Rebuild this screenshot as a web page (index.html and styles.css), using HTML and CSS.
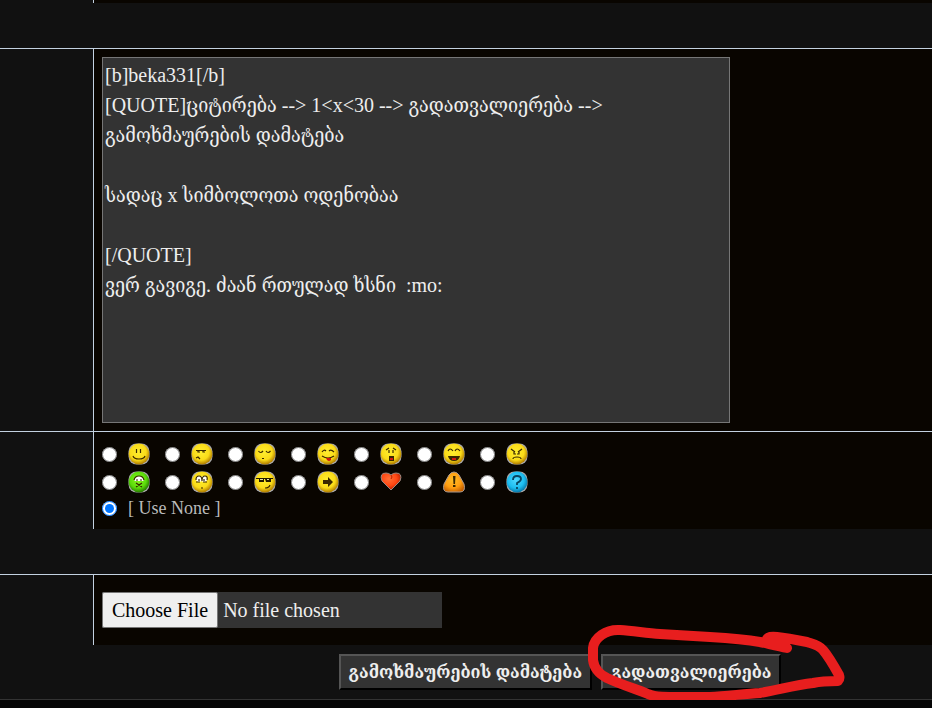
FILE: index.html
```html
<!DOCTYPE html>
<html lang="ka">
<head>
    <meta charset="UTF-8">
    <meta name="viewport" content="width=device-width, initial-scale=1.0">
    <title>გამოხმაურების დამატება</title>
    <link rel="stylesheet" href="styles.css">
</head>
<body>
    <svg class="defs" aria-hidden="true">
        <defs>
            <radialGradient id="yellow" cx="45%" cy="40%" r="60%">
                <stop offset="0" stop-color="#ffee30"/>
                <stop offset="0.65" stop-color="#fadb18"/>
                <stop offset="1" stop-color="#b07c00"/>
            </radialGradient>
            <radialGradient id="green" cx="45%" cy="40%" r="60%">
                <stop offset="0" stop-color="#8af520"/>
                <stop offset="0.65" stop-color="#5bdc0a"/>
                <stop offset="1" stop-color="#267800"/>
            </radialGradient>
            <radialGradient id="blue" cx="45%" cy="40%" r="60%">
                <stop offset="0" stop-color="#4fd8ff"/>
                <stop offset="0.65" stop-color="#1cbdf0"/>
                <stop offset="1" stop-color="#0878a8"/>
            </radialGradient>
            <radialGradient id="orange" cx="45%" cy="40%" r="65%">
                <stop offset="0" stop-color="#ffbf28"/>
                <stop offset="0.6" stop-color="#ff9d10"/>
                <stop offset="1" stop-color="#c56000"/>
            </radialGradient>
            <radialGradient id="red" cx="40%" cy="35%" r="65%">
                <stop offset="0" stop-color="#ff7036"/>
                <stop offset="0.6" stop-color="#ff4713"/>
                <stop offset="1" stop-color="#b52000"/>
            </radialGradient>
            <g id="ball">
                <rect x="0.500" y="0.500" width="21" height="21" rx="8" fill="#aaa"/>
                <circle cx="11" cy="11" r="10.400"/>
            </g>
        </defs>
    </svg>

    <form id="postForm">
        <div class="row row-end">
            <div class="side"></div>
            <div class="main"></div>
        </div>

        <div class="spacer"></div>

        <div class="row">
            <div class="side"></div>
            <div class="main post">
                <textarea id="post" name="post" aria-label="Post" spellcheck="false">[b]beka331[/b]
[QUOTE]ციტირება --&gt; 1&lt;x&lt;30 --&gt; გადათვალიერება --&gt; გამოხმაურების დამატება

სადაც x სიმბოლოთა ოდენობაა

[/QUOTE]
ვერ გავიგე. ძაან რთულად ხსნი  :mo:</textarea>
            </div>
        </div>

        <div class="row">
            <div class="side"></div>
            <div class="main icons">
                <div class="icon-grid">
                    <label><input type="radio" name="iconid" value="1" aria-label="Smile">
                        <svg viewBox="0 0 22 22"><use href="#ball" fill="url(#yellow)"/><path class="line" d="M8.500 6v4M12.500 6v4M5 13q1 3 6 3t6-3"/></svg></label>
                    <label><input type="radio" name="iconid" value="2" aria-label="Dry">
                        <svg viewBox="0 0 22 22"><use href="#ball" fill="url(#yellow)"/><path class="line" d="M5 7.500h10M7 8v1h2M12 8v1h2M5 15l2-1 2 2"/></svg></label>
                    <label><input type="radio" name="iconid" value="3" aria-label="Sleep">
                        <svg viewBox="0 0 22 22"><use href="#ball" fill="url(#yellow)"/><path class="line" d="M4.500 8q2 3 4.500 0M12 8q2 3 4.500 0M8 15.500h2"/></svg></label>
                    <label><input type="radio" name="iconid" value="4" aria-label="Tongue">
                        <svg viewBox="0 0 22 22"><use href="#ball" fill="url(#yellow)"/><path class="line" d="M5 9q2-3 4-1M12 8q2-2 5 1M5 13q6 4 12 0"/><path d="M9 15h5v2q-2 2-4 0z" fill="#d01810"/></svg></label>
                    <label><input type="radio" name="iconid" value="5" aria-label="Shocked">
                        <svg viewBox="0 0 22 22"><use href="#ball" fill="url(#yellow)"/><path class="line" d="M6 7l3-2M13 5l3 2M9 7v3M13 7v3"/><path d="M9 13h5v5H9z" fill="#3a2800"/><path d="M10 15h3v2h-3z" fill="#d01810"/></svg></label>
                    <label><input type="radio" name="iconid" value="6" aria-label="Laugh">
                        <svg viewBox="0 0 22 22"><use href="#ball" fill="url(#yellow)"/><path class="line" d="M5 8q2-4 5 0M12 8q2-4 5 0"/><path d="M5 13h12q-1 5-6 5t-6-5z" fill="#3a2800"/><path d="M9 15h4v2H9z" fill="#d01810"/></svg></label>
                    <label><input type="radio" name="iconid" value="7" aria-label="Angry">
                        <svg viewBox="0 0 22 22"><use href="#ball" fill="url(#yellow)"/><path class="line" d="M5 6l4 3M16 6l-4 3M8 8v3h2M13 8v3h-2M7 16q0-2 4-2t4 2"/></svg></label>

                    <label><input type="radio" name="iconid" value="8" aria-label="Sick">
                        <svg viewBox="0 0 22 22"><use href="#ball" fill="url(#green)"/><path d="M6 9q1-4 5-4t5 4l-1 1H7z" fill="#fff"/><path class="line" d="M6 9q1-4 5-4t5 4M8 9h2M12 9h2M8 12l6 4M14 12l-6 4"/></svg></label>
                    <label><input type="radio" name="iconid" value="9" aria-label="Roll eyes">
                        <svg viewBox="0 0 22 22"><use href="#ball" fill="url(#yellow)"/><circle cx="8" cy="8" r="3" fill="#fff"/><circle cx="13" cy="8" r="3" fill="#fff"/><path class="line" d="M5 9q0-4 3-4t3 5q0-5 3-5t2 4M5 11h4M12 11h4M8 8v2M13 8v2M10 17h2"/></svg></label>
                    <label><input type="radio" name="iconid" value="10" aria-label="Cool">
                        <svg viewBox="0 0 22 22"><use href="#ball" fill="url(#yellow)"/><path d="M2 7h17v1h-2v3h-5l-1-3h-1v3H5V8H2z" fill="#201800"/><path d="M6 8h3v1H6zM13 8h2v1h-2z" fill="#e8e0b0"/><path class="line" d="M11 17q4 0 5-3"/></svg></label>
                    <label><input type="radio" name="iconid" value="11" aria-label="Arrow">
                        <svg viewBox="0 0 22 22"><use href="#ball" fill="url(#yellow)"/><path d="M6 9h5V6l5 5-5 5v-3H6z" fill="#3a2800"/></svg></label>
                    <label><input type="radio" name="iconid" value="12" aria-label="Heart">
                        <svg viewBox="0 0 22 22"><path d="M11 19L2 10Q-1 2 6 2q3 0 5 2 2-2 5-2 7 0 4 8z" fill="url(#red)" stroke="#9b8a82"/><path d="M11 4l1 2-1 2" fill="none" stroke="#b52000"/></svg></label>
                    <label><input type="radio" name="iconid" value="13" aria-label="Warning">
                        <svg viewBox="0 0 22 22"><path d="M11 1q3 0 5 3l5 9q2 8-4 8H5q-6 0-4-8l5-9q2-3 5-3z" fill="url(#orange)" stroke="#a89a90"/><path d="M10 5h2.500l-.5 8h-1.500zM10 14h2.500v2H10z" fill="#3a2800"/></svg></label>
                    <label><input type="radio" name="iconid" value="14" aria-label="Question">
                        <svg viewBox="0 0 22 22"><use href="#ball" fill="url(#blue)"/><path d="M7 9q0-4 4-4t4 3q0 2-4 4v2M11 16v2" fill="none" stroke="#084460" stroke-width="1.800"/></svg></label>
                </div>
                <label class="none"><input type="radio" name="iconid" value="0" checked> <span>[ Use None ]</span></label>
            </div>
        </div>

        <div class="spacer"></div>

        <div class="row">
            <div class="side"></div>
            <div class="main upload">
                <input type="file" id="upload" name="upload" aria-label="File">
            </div>
        </div>

        <div class="actions">
            <button type="submit" class="btn">გამოხმაურების დამატება</button>
            <div class="marked">
                <button type="button" class="btn">გადათვალიერება</button>
                <svg class="marker" viewBox="0 0 262 84" aria-hidden="true">
                    <path d="M201 28C193 26 183 24 174 22C157 19 141 18 124 17L74 14C60 13 48 11 34 10C20 9 8 18 7 28V40C8 48 13 54 21 58C36 65 50 69 62 74C70 78 84 77 124 77C141 76 158 74 174 73C192 70 209 65 227 63C236 61 244 61 252 61C254 59 254 58 253 55C248 46 243 37 237 30C233 25 227 24 221 22C211 20 201 18 191 17Q182 16 181 19"/>
                </svg>
            </div>
        </div>
    </form>
</body>
</html>
```
FILE: styles.css
```css
body {
    margin: 0;
    background-color: #060606;
    color: #bbb;
    font-family: Sylfaen, "Liberation Serif", "DejaVu Serif Condensed", "DejaVu Serif", serif;
    font-size: 18px;
}

form {
    background-color: #111;
    border-bottom: 1px solid #333;
}

.defs {
    position: absolute;
    width: 0;
    height: 0;
}

.row {
    display: flex;
    border-top: 1px solid #c3d1e0;
}

.row-end {
    height: 3px;
    border-top: none;
}

.side {
    width: 93px;
    flex-shrink: 0;
}

.main {
    flex: 1;
    background-color: #090500;
    border-left: 1px solid #c3d1e0;
}

.spacer {
    height: 45px;
}

.post {
    padding: 8px;
}

textarea {
    display: block;
    box-sizing: border-box;
    width: 628px;
    max-width: 100%;
    height: 366px;
    padding: 2px;
    border: 1px solid #767676;
    background-color: #333;
    color: #eee;
    font-family: inherit;
    font-size: 20px;
    line-height: 30px;
    resize: none;
}

.icons {
    padding: 8px 8px 9px;
}

.icon-grid {
    display: grid;
    grid-template-columns: repeat(7, 63px);
}

.icons label {
    display: flex;
    align-items: center;
    gap: 11px;
    height: 28px;
}

.icons .none {
    height: 24px;
}

input[type="radio"] {
    width: 15px;
    height: 15px;
    margin: 0;
}

.icons svg {
    width: 22px;
    height: 22px;
}

.line {
    fill: none;
    stroke: #3a2800;
    stroke-width: 1.2;
}

.upload {
    padding: 17px 8px;
}

input[type="file"] {
    display: block;
    width: 340px;
    height: 36px;
    background-color: #333;
    color: #eee;
    font-family: inherit;
    font-size: 20px;
}

input[type="file"]::file-selector-button {
    height: 36px;
    margin: 0 5px 0 0;
    padding: 0 9px;
    border: 1px solid #767676;
    border-radius: 2px;
    background-color: #efefef;
    color: #000;
    font-family: inherit;
    font-size: 20px;
}

.actions {
    display: flex;
    justify-content: center;
    gap: 9px;
    padding: 9px 0 9px 188px;
}

.btn {
    height: 36px;
    padding: 0 8px;
    border: 2px solid;
    border-color: #555 #000 #000 #555;
    background-color: #333;
    color: #eee;
    font-family: inherit;
    font-size: 18px;
    font-weight: bold;
    white-space: nowrap;
}

.marked {
    position: relative;
}

.marker {
    position: absolute;
    top: -34px;
    left: -15px;
    width: 262px;
    height: 84px;
    overflow: visible;
    pointer-events: none;
}

.marker path {
    fill: none;
    stroke: #e81e1e;
    stroke-width: 10;
    stroke-linecap: round;
    stroke-linejoin: round;
}
```
